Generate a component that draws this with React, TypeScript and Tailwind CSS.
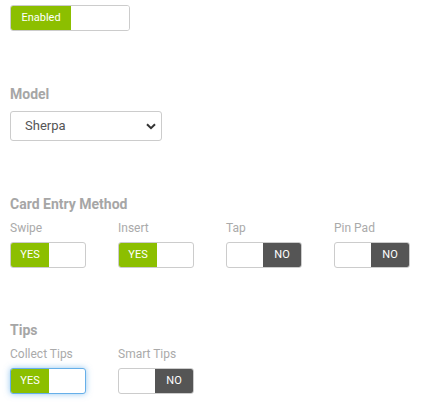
import type { ReactNode } from 'react'

const font = { fontFamily: 'Roboto, "Liberation Sans", sans-serif' }

function Toggle({ on, label, focused }: { on: boolean; label: string; focused?: boolean }) {
  return (
    <div
      className={`flex h-[26px] w-[76px] overflow-hidden rounded-[3px] border bg-white ${
        focused ? 'border-[#66afe9] shadow-[0_0_6px_rgba(102,175,233,0.7)]' : 'border-[#cccccc]'
      }`}
    >
      {on ? (
        <>
          <div className="flex w-[38px] items-center justify-center bg-[#8cbf00] text-[11px] text-white">{label}</div>
          <div className="flex-1" />
        </>
      ) : (
        <>
          <div className="flex-1" />
          <div className="flex w-[38px] items-center justify-center bg-[#555555] text-[11px] text-white">{label}</div>
        </>
      )}
    </div>
  )
}

function Field({ label, children }: { label: string; children: ReactNode }) {
  return (
    <div className="flex w-[108px] shrink-0 flex-col">
      <div className="h-[14px] text-[12px] leading-[14px] text-[#aaaaaa]">{label}</div>
      <div className="mt-[7px]">{children}</div>
    </div>
  )
}

function Heading({ children }: { children: ReactNode }) {
  return <div className="h-[16px] text-[14px] font-bold leading-[16px] text-[#a6a6a6]">{children}</div>
}

export default function App() {
  return (
    <div className="min-h-screen w-[429px] bg-white pl-[10px] pt-[5px]" style={font}>
      <div className="flex h-[26px] w-[120px] overflow-hidden rounded-[3px] border border-[#cccccc]">
        <div className="flex w-[60px] items-center justify-center bg-[#8cbf00] text-[11px] text-white">Enabled</div>
        <div className="flex-1 bg-white" />
      </div>

      <div className="mt-[55px]">
        <Heading>Model</Heading>
        <div className="relative mt-[9px] w-[152px]">
          <select
            defaultValue="Sherpa"
            className="h-[30px] w-full appearance-none rounded-[3px] border border-[#cccccc] bg-white pl-[14px] text-[13px] text-[#555555] outline-none"
          >
            <option>Sherpa</option>
          </select>
          <svg
            className="pointer-events-none absolute right-[6px] top-[12px]"
            width="10"
            height="7"
            viewBox="0 0 10 7"
            fill="none"
          >
            <path d="M1 1.2l4 4 4-4" stroke="#333" strokeWidth="2" />
          </svg>
        </div>
      </div>

      <div className="mt-[55px]">
        <Heading>Card Entry Method</Heading>
        <div className="mt-[9px] flex">
          <Field label="Swipe"><Toggle on label="YES" /></Field>
          <Field label="Insert"><Toggle on label="YES" /></Field>
          <Field label="Tap"><Toggle on={false} label="NO" /></Field>
          <Field label="Pin Pad"><Toggle on={false} label="NO" /></Field>
        </div>
      </div>

      <div className="mt-[54px]">
        <Heading>Tips</Heading>
        <div className="mt-[9px] flex">
          <Field label="Collect Tips"><Toggle on label="YES" focused /></Field>
          <Field label="Smart Tips"><Toggle on={false} label="NO" /></Field>
        </div>
      </div>
    </div>
  )
}
